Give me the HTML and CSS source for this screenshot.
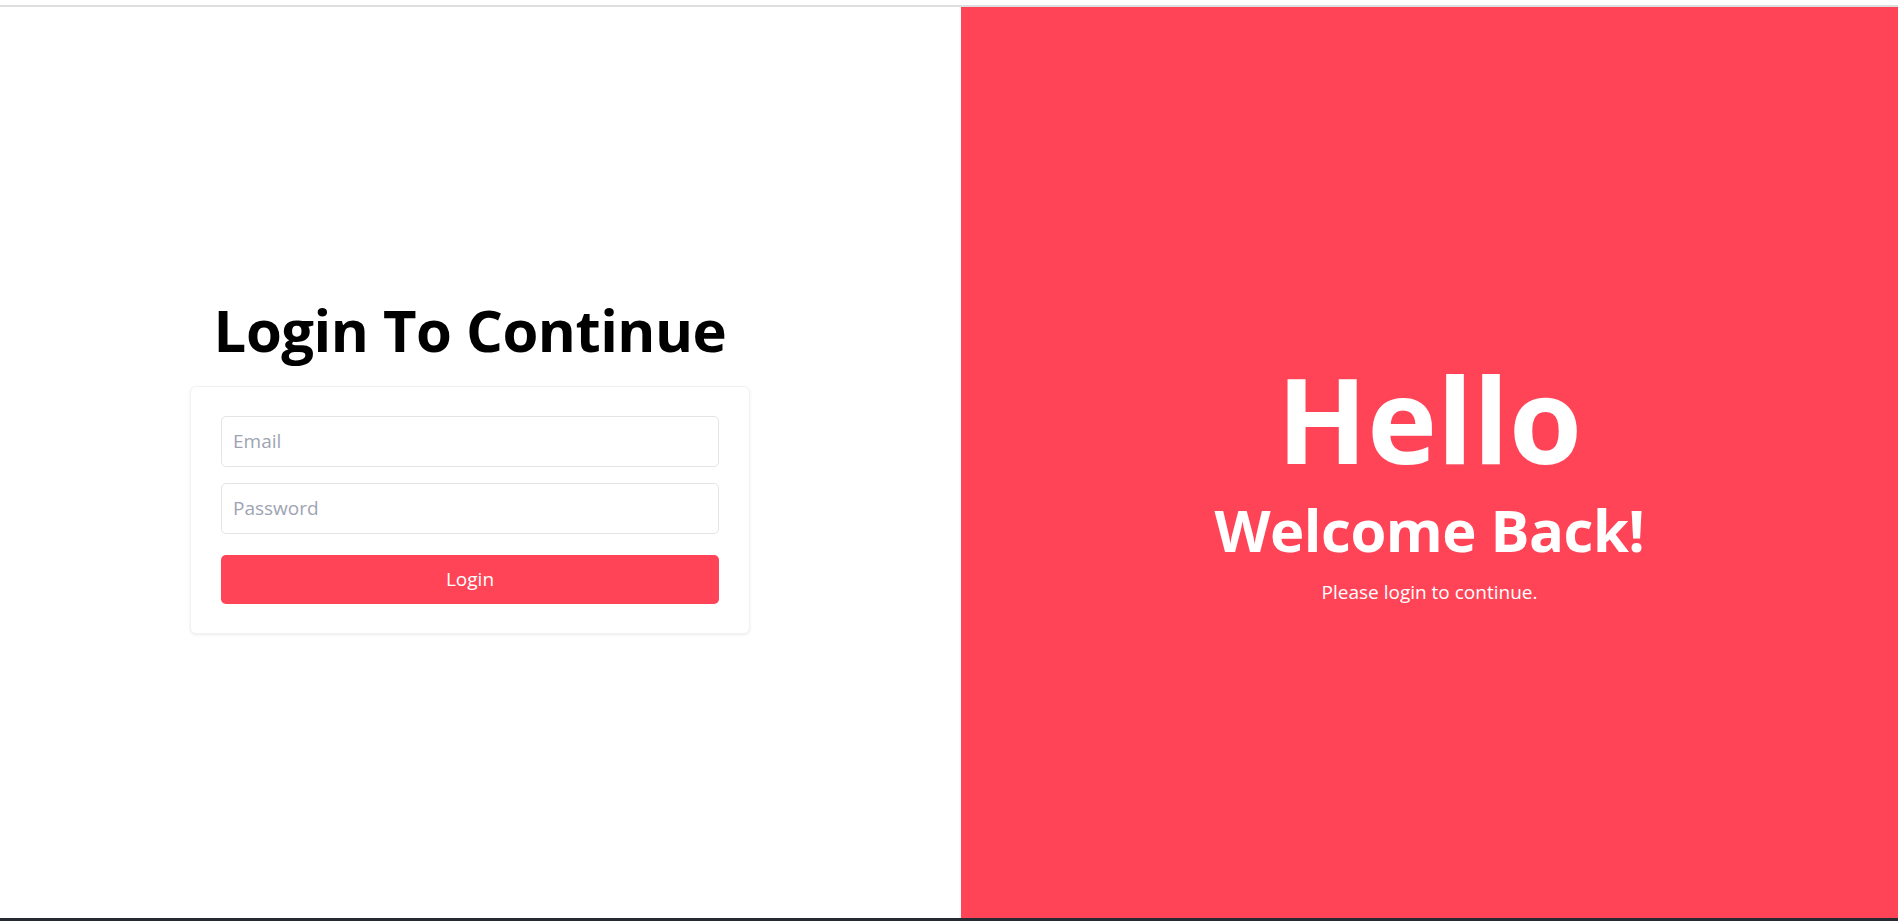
FILE: index.html
```html
<!DOCTYPE html>
<html lang="en">
<head>
<meta charset="utf-8">
<title>Login</title>
<link rel="stylesheet" href="styles.css">
</head>
<body>
<div class="topbar"></div>
<main class="page">
  <section class="left">
    <h1 class="title">Login To Continue</h1>
    <form class="card">
      <input class="field" type="email" placeholder="Email">
      <input class="field" type="password" placeholder="Password">
      <button class="btn" type="button">Login</button>
    </form>
  </section>
  <section class="right">
    <h2 class="hello">Hello</h2>
    <h3 class="welcome">Welcome Back!</h3>
    <p class="sub">Please login to continue.</p>
  </section>
</main>
<div class="bottombar"></div>
</body>
</html>
```
FILE: styles.css
```css
* { box-sizing: border-box; }
html, body { margin: 0; padding: 0; height: 100%; }
body {
  font-family: "Open Sans", "Noto Sans", "Liberation Sans", sans-serif;
  background: #ffffff;
  display: flex;
  flex-direction: column;
  overflow: hidden;
}
.topbar {
  height: 7px;
  background: #ffffff;
  border-bottom: 2px solid #dedede;
  flex: none;
}
.page {
  flex: 1;
  display: grid;
  grid-template-columns: 940px 1fr;
  column-gap: 21px;
}
.bottombar {
  height: 3px;
  background: #262b33;
  flex: none;
}
.left {
  display: flex;
  flex-direction: column;
  align-items: center;
  justify-content: center;
}
.title {
  margin: 0 0 18px;
  font-size: 58px;
  font-weight: 700;
  line-height: 76px;
  color: #000;
  letter-spacing: -0.5px;
}
.card {
  width: 560px;
  padding: 29px 30px 29px;
  border: 1px solid #f2f2f2;
  border-radius: 6px;
  box-shadow: 0 1px 3px rgba(0,0,0,0.08);
  display: flex;
  flex-direction: column;
  background: #fff;
}
.field {
  height: 51px;
  padding: 0 11px;
  border: 1px solid #e3e4e8;
  border-radius: 5px;
  font-family: inherit;
  font-size: 19px;
  color: #333;
  outline: none;
  margin-bottom: 16px;
}
.field:nth-of-type(2) { margin-bottom: 21px; }
.field::placeholder { color: #9ea4b3; }
.btn {
  height: 49px;
  border: none;
  border-radius: 5px;
  background: #ff4458;
  color: #fff;
  font-family: inherit;
  font-size: 19px;
  cursor: pointer;
}
.right {
  background: #ff4458;
  color: #fff;
  display: flex;
  flex-direction: column;
  align-items: center;
  justify-content: center;
  text-align: center;
  padding-top: 40px;
}
.hello {
  margin: 0;
  font-size: 118px;
  font-weight: 700;
  line-height: 1;
}
.welcome {
  margin: 17px 0 0;
  font-size: 58px;
  font-weight: 700;
  line-height: 1.2;
  letter-spacing: -0.5px;
}
.sub {
  margin: 15px 0 0;
  font-size: 19px;
}
```
